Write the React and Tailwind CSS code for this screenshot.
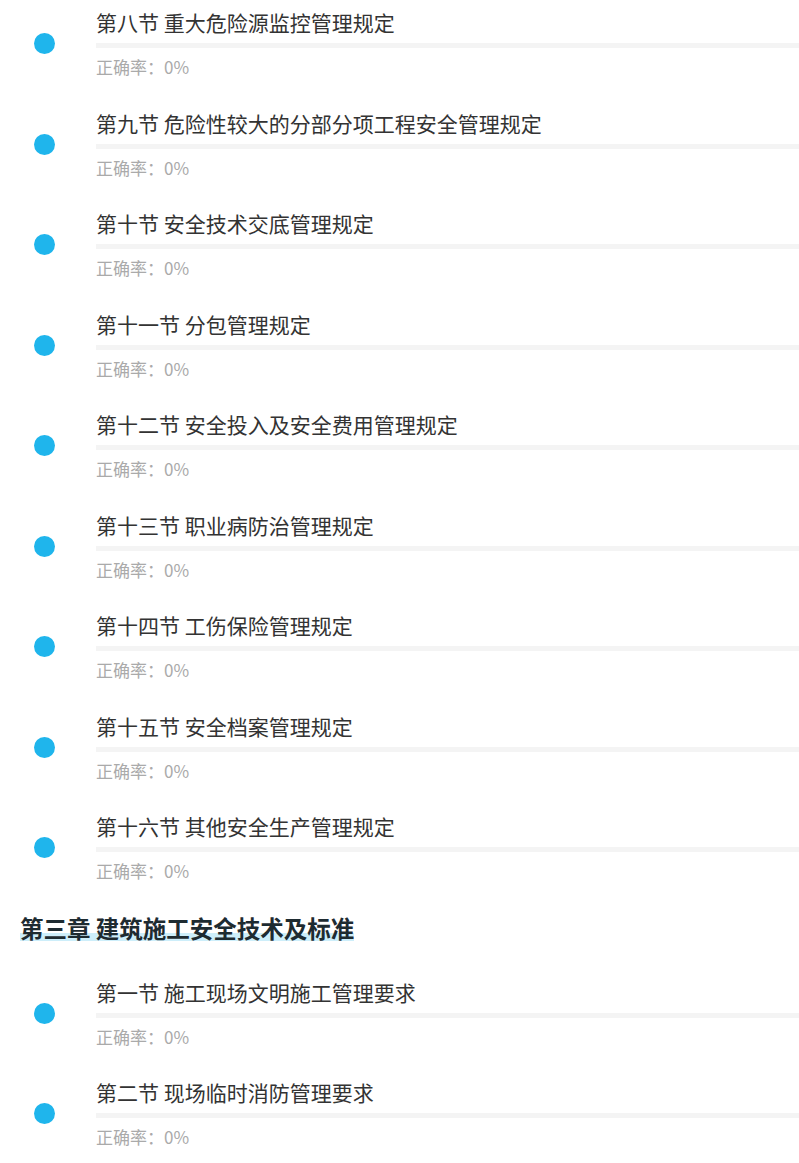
import React from 'react';

const before = [
  '第八节 重大危险源监控管理规定',
  '第九节 危险性较大的分部分项工程安全管理规定',
  '第十节 安全技术交底管理规定',
  '第十一节 分包管理规定',
  '第十二节 安全投入及安全费用管理规定',
  '第十三节 职业病防治管理规定',
  '第十四节 工伤保险管理规定',
  '第十五节 安全档案管理规定',
  '第十六节 其他安全生产管理规定',
];

const after = [
  '第一节 施工现场文明施工管理要求',
  '第二节 现场临时消防管理要求',
];

const font = { fontFamily: '"Noto Sans CJK SC", "Noto Sans", sans-serif' };

const Section = ({ title }) => (
  <div className="flex h-[100.5px]">
    <div className="w-[96px] shrink-0 flex justify-center">
      <div className="mt-[33px] ml-[-7px] w-[21px] h-[21px] rounded-full bg-[#1fb5ec]"></div>
    </div>
    <div className="flex-1 pt-[7px]">
      <p className="text-[21px] leading-[30px] text-[#333333]">{title}</p>
      <div className="mt-[6px] h-[5px] bg-[#f4f4f4]"></div>
      <p className="mt-[6px] text-[17px] leading-[26px] text-[#aaaaaa]">正确率：0%</p>
    </div>
  </div>
);

export default function App() {
  return (
    <div className="w-[799px] bg-white" style={font}>
      {before.map((t) => (
        <Section key={t} title={t} />
      ))}
      <div className="pt-[10px] pb-[27px] pl-[20px]">
        <span className="inline-block h-[26px] text-[23.5px] leading-[26px] font-bold text-[#1e2b31] bg-[linear-gradient(transparent_69%,#cdeefa_69%)]">
          第三章 建筑施工安全技术及标准
        </span>
      </div>
      {after.map((t) => (
        <Section key={t} title={t} />
      ))}
    </div>
  );
}
